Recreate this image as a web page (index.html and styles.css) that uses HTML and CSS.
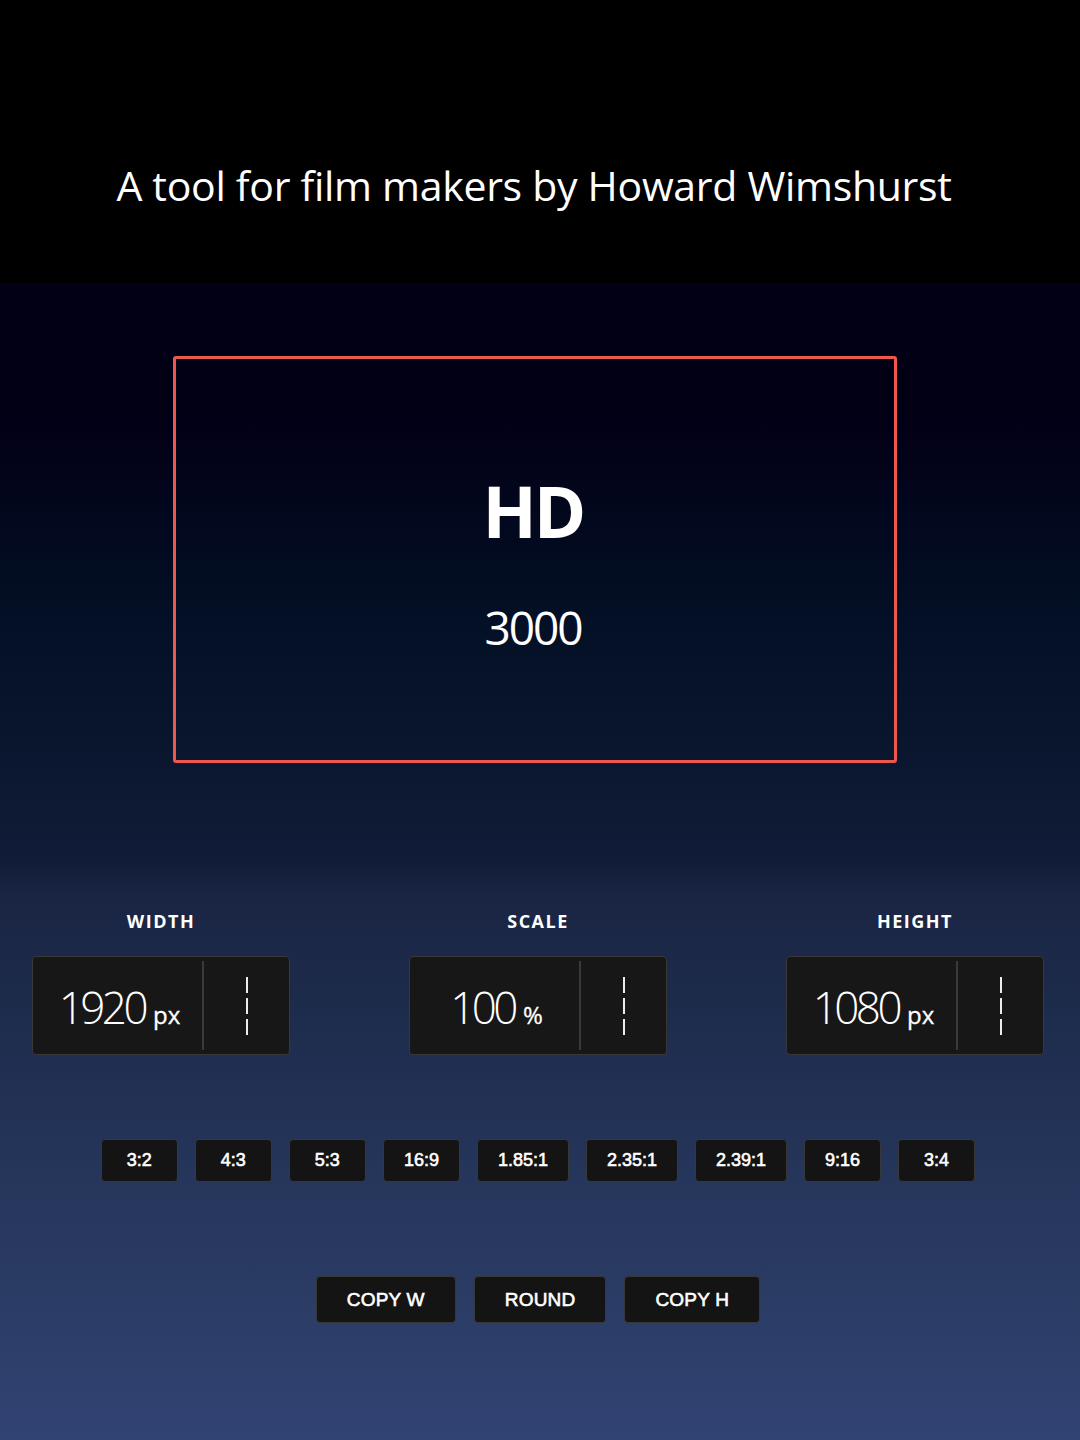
FILE: index.html
```html
<!DOCTYPE html>
<html lang="en">
<head>
<meta charset="utf-8">
<title>Aspect Ratio Calculator</title>
<link rel="stylesheet" href="styles.css">
</head>
<body>
<header class="top">
  <h1 class="title">A tool for film makers by Howard Wimshurst</h1>
</header>
<main class="main">
  <section class="frame">
    <div class="frame-name">HD</div>
    <div class="frame-value">3000</div>
  </section>

  <section class="fields">
    <div class="field">
      <div class="field-label">WIDTH</div>
      <div class="field-box">
        <div class="field-value"><span class="num">1920</span><span class="unit">px</span></div>
        <div class="field-handle">
          <svg width="4" height="58" viewBox="0 0 4 58"><line x1="2" y1="0" x2="2" y2="58" stroke="#ececec" stroke-width="2" stroke-dasharray="16 5"/></svg>
        </div>
      </div>
    </div>
    <div class="field">
      <div class="field-label">SCALE</div>
      <div class="field-box">
        <div class="field-value"><span class="num">100</span><span class="unit">%</span></div>
        <div class="field-handle">
          <svg width="4" height="58" viewBox="0 0 4 58"><line x1="2" y1="0" x2="2" y2="58" stroke="#ececec" stroke-width="2" stroke-dasharray="16 5"/></svg>
        </div>
      </div>
    </div>
    <div class="field">
      <div class="field-label">HEIGHT</div>
      <div class="field-box">
        <div class="field-value"><span class="num">1080</span><span class="unit">px</span></div>
        <div class="field-handle">
          <svg width="4" height="58" viewBox="0 0 4 58"><line x1="2" y1="0" x2="2" y2="58" stroke="#ececec" stroke-width="2" stroke-dasharray="16 5"/></svg>
        </div>
      </div>
    </div>
  </section>

  <section class="ratios">
    <button class="ratio">3:2</button>
    <button class="ratio">4:3</button>
    <button class="ratio">5:3</button>
    <button class="ratio">16:9</button>
    <button class="ratio">1.85:1</button>
    <button class="ratio">2.35:1</button>
    <button class="ratio">2.39:1</button>
    <button class="ratio">9:16</button>
    <button class="ratio">3:4</button>
  </section>

  <section class="actions">
    <button class="action">COPY W</button>
    <button class="action">ROUND</button>
    <button class="action">COPY H</button>
  </section>
</main>
</body>
</html>
```
FILE: styles.css
```css
* {
  box-sizing: border-box;
}

html, body {
  margin: 0;
  padding: 0;
  background: #000;
}

body {
  width: 1080px;
  min-height: 1440px;
  font-family: "Open Sans", "Noto Sans", sans-serif;
  color: #fff;
}

.top {
  height: 283px;
  background: #000;
  padding-top: 160px;
}

.title {
  margin: 0;
  font-family: "Open Sans", "Noto Sans", sans-serif;
  font-weight: 400;
  font-size: 41px;
  line-height: 50px;
  text-align: center;
  color: #fff;
  letter-spacing: -0.3px;
  padding-right: 12px;
}

.main {
  height: 1157px;
  padding-top: 73px;
  background: linear-gradient(to bottom,
    #020014 0%,
    #020016 12%,
    #030f24 28%,
    #0a162e 40%,
    #111d38 50%,
    #1a2543 53%,
    #1d2b4b 62%,
    #243459 75%,
    #2b3c65 88%,
    #314373 100%);
}

.frame {
  width: 724px;
  height: 407px;
  margin: 0 0 0 173px;
  border: 3px solid #f0574c;
  border-radius: 3px;
  padding-top: 112px;
  text-align: center;
}

.frame-name {
  font-weight: 700;
  font-size: 71px;
  line-height: 80px;
  letter-spacing: -3px;
  padding-right: 4px;
}

.frame-value {
  margin-top: 46px;
  font-weight: 400;
  font-size: 46px;
  line-height: 60px;
  letter-spacing: -2px;
  padding-right: 4px;
}

.fields {
  display: grid;
  grid-template-columns: 258px 258px 258px;
  justify-content: space-between;
  padding: 0 36px 0 32px;
  margin-top: 146px;
}

.field {
  display: flex;
  flex-direction: column;
  align-items: center;
}

.field-label {
  font-weight: 700;
  font-size: 18px;
  line-height: 24px;
  letter-spacing: 1.5px;
  height: 24px;
}

.field-box {
  margin-top: 23px;
  width: 258px;
  height: 99px;
  background: #171717;
  border: 1px solid #383838;
  border-radius: 4px;
  display: flex;
  align-items: stretch;
  padding: 4px 0;
}

.field-value {
  width: 171px;
  display: flex;
  align-items: baseline;
  justify-content: center;
  padding-top: 18px;
  padding-left: 4px;
  border-right: 2px solid #3a3a3a;
}

.num {
  font-weight: 300;
  font-size: 44px;
  line-height: 56px;
  letter-spacing: -3.5px;
}

.unit {
  font-weight: 400;
  font-size: 24px;
  margin-left: 8px;
  -webkit-text-stroke: 0.3px #fff;
}

.field-handle {
  flex: 1;
  display: flex;
  align-items: center;
  justify-content: center;
}

.field-handle svg {
  display: block;
}

.ratios {
  display: flex;
  justify-content: center;
  gap: 17px;
  margin-top: 84px;
  padding-right: 4px;
}

.ratio {
  height: 43px;
  min-width: 77px;
  padding: 0 20px;
  background: #141414;
  border: 1px solid #383838;
  border-radius: 4px;
  color: #fff;
  font-family: "Liberation Sans", Arial, sans-serif;
  font-size: 18px;
  font-weight: 400;
  -webkit-text-stroke: 0.6px #fff;
}

.actions {
  display: flex;
  justify-content: center;
  gap: 18px;
  margin-top: 94px;
  padding-right: 4px;
}

.action {
  height: 47px;
  padding: 0 30px;
  background: #141414;
  border: 1px solid #383838;
  border-radius: 4px;
  color: #fff;
  font-family: "Liberation Sans", Arial, sans-serif;
  font-size: 19px;
  font-weight: 400;
  letter-spacing: 0.2px;
  -webkit-text-stroke: 0.6px #fff;
}
```
